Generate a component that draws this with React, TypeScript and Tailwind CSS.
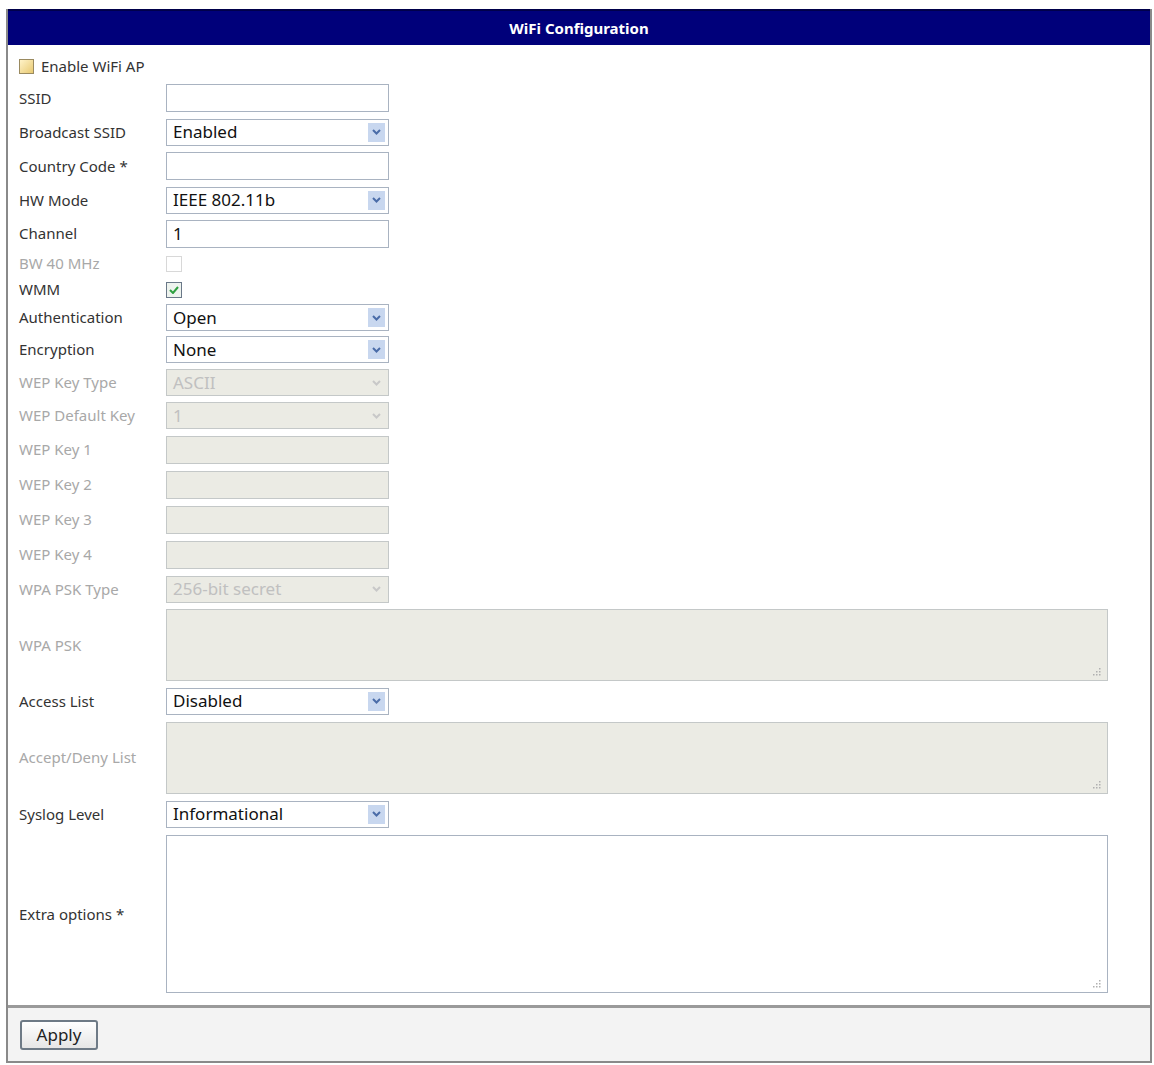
import React from "react";

const Arrow = ({ disabled }: { disabled?: boolean }) => (
  <div className={`absolute right-[3px] top-[3px] bottom-[3px] w-[17px] flex items-center justify-center ${disabled ? "bg-[#ebebe4]" : "bg-[#c8d7ef]"}`}>
    <svg width="9" height="6" viewBox="0 0 9 6"><path d="M1 1 L4.5 4.5 L8 1" fill="none" stroke={disabled ? "#c8c8c8" : "#4a6ca8"} strokeWidth="2" /></svg>
  </div>
);

const Input = ({ value = "", disabled }: { value?: string; disabled?: boolean }) => (
  <div className={`w-[223px] h-[28px] border flex items-center px-[6px] text-[17px] font-['Liberation_Sans',Arial,sans-serif] ${disabled ? "bg-[#ebebe4] border-[#c4c8c8] text-[#aaa]" : "bg-white border-[#a9b3c1] text-[#111]"}`}>{value}</div>
);

const Select = ({ value, disabled }: { value: string; disabled?: boolean }) => (
  <div className={`relative w-[223px] h-[27px] border flex items-center px-[6px] text-[17px] font-['Liberation_Sans',Arial,sans-serif] ${disabled ? "bg-[#ebebe4] border-[#c4c8c8] text-[#c0c0c0]" : "bg-white border-[#a9b3c1] text-[#111]"}`}>
    {value}
    <Arrow disabled={disabled} />
  </div>
);

const Grip = () => (
  <svg className="absolute right-[6px] bottom-[4px]" width="9" height="9" viewBox="0 0 9 9" fill="#b0b0b0">
    <rect x="7" y="1" width="1.5" height="1.5" /><rect x="4" y="4" width="1.5" height="1.5" /><rect x="7" y="4" width="1.5" height="1.5" />
    <rect x="1" y="7" width="1.5" height="1.5" /><rect x="4" y="7" width="1.5" height="1.5" /><rect x="7" y="7" width="1.5" height="1.5" />
  </svg>
);

const Area = ({ h, disabled }: { h: string; disabled?: boolean }) => (
  <div className={`relative w-[942px] ${h} border ${disabled ? "bg-[#ebebe4] border-[#c4c8c8]" : "bg-white border-[#a9b3c1]"}`}><Grip /></div>
);

const Row = ({ label, h, dis, children }: { label: string; h: string; dis?: boolean; children?: React.ReactNode }) => (
  <div className={`flex items-center ${h}`}>
    <div className={`w-[147px] whitespace-nowrap ${dis ? "text-[#a8a8a8]" : "text-[#333]"}`}>{label}</div>
    {children}
  </div>
);

export default function App() {
  return (
    <div className="w-[1154px] h-[1065px] bg-white pt-[9px] pl-[6px] font-['DejaVu_Sans',Verdana,sans-serif] text-[15px]">
      <div className="w-[1146px] h-[1054px] border-2 border-[#8a8a8a] border-t-0 flex flex-col">
        <div className="h-[36px] bg-[#00007a] border-t-2 border-[#00004a] flex items-center justify-center text-white font-bold text-[15px]">WiFi Configuration</div>
        <div className="flex-1 flex flex-col pl-[11px] pt-[6px]">
          <div className="flex items-center h-[30px] text-[#333]">
            <div className="w-[15px] h-[15px] border border-[#9a8a60] bg-gradient-to-br from-[#fff3c8] to-[#e8c970] mr-[7px]" />
            Enable WiFi AP
          </div>
          <Row label="SSID" h="h-[34px]"><Input /></Row>
          <Row label="Broadcast SSID" h="h-[34px]"><Select value="Enabled" /></Row>
          <Row label="Country Code *" h="h-[34px]"><Input /></Row>
          <Row label="HW Mode" h="h-[34px]"><Select value="IEEE 802.11b" /></Row>
          <Row label="Channel" h="h-[33px]"><Input value="1" /></Row>
          <Row label="BW 40 MHz" h="h-[27px]" dis><div className="w-[16px] h-[16px] border border-[#d8d8d8] bg-white" /></Row>
          <Row label="WMM" h="h-[25px]">
            <div className="w-[16px] h-[16px] border border-[#6a7888] bg-[#eef3ee] flex items-center justify-center">
              <svg width="10" height="8" viewBox="0 0 10 8"><path d="M1 4 L4 7 L9 1" fill="none" stroke="#2fa040" strokeWidth="2" /></svg>
            </div>
          </Row>
          <Row label="Authentication" h="h-[31px]"><Select value="Open" /></Row>
          <Row label="Encryption" h="h-[33px]"><Select value="None" /></Row>
          <Row label="WEP Key Type" h="h-[33px]" dis><Select value="ASCII" disabled /></Row>
          <Row label="WEP Default Key" h="h-[33px]" dis><Select value="1" disabled /></Row>
          <Row label="WEP Key 1" h="h-[35px]" dis><Input disabled /></Row>
          <Row label="WEP Key 2" h="h-[35px]" dis><Input disabled /></Row>
          <Row label="WEP Key 3" h="h-[35px]" dis><Input disabled /></Row>
          <Row label="WEP Key 4" h="h-[35px]" dis><Input disabled /></Row>
          <Row label="WPA PSK Type" h="h-[34px]" dis><Select value="256-bit secret" disabled /></Row>
          <Row label="WPA PSK" h="h-[78px]" dis><Area h="h-[72px]" disabled /></Row>
          <Row label="Access List" h="h-[34px]"><Select value="Disabled" /></Row>
          <Row label="Accept/Deny List" h="h-[79px]" dis><Area h="h-[72px]" disabled /></Row>
          <Row label="Syslog Level" h="h-[34px]"><Select value="Informational" /></Row>
          <Row label="Extra options *" h="h-[166px]"><Area h="h-[158px]" /></Row>
        </div>
        <div className="h-[56px] border-t-[3px] border-[#9a9a9a] bg-[#f3f3f3] flex items-center pl-[12px]">
          <div className="w-[78px] h-[30px] border-2 border-[#6e7a86] rounded-[3px] bg-gradient-to-b from-white to-[#e6e6e6] flex items-center justify-center text-[17px] text-[#222] font-['Liberation_Sans',Arial,sans-serif]">Apply</div>
        </div>
      </div>
    </div>
  );
}
